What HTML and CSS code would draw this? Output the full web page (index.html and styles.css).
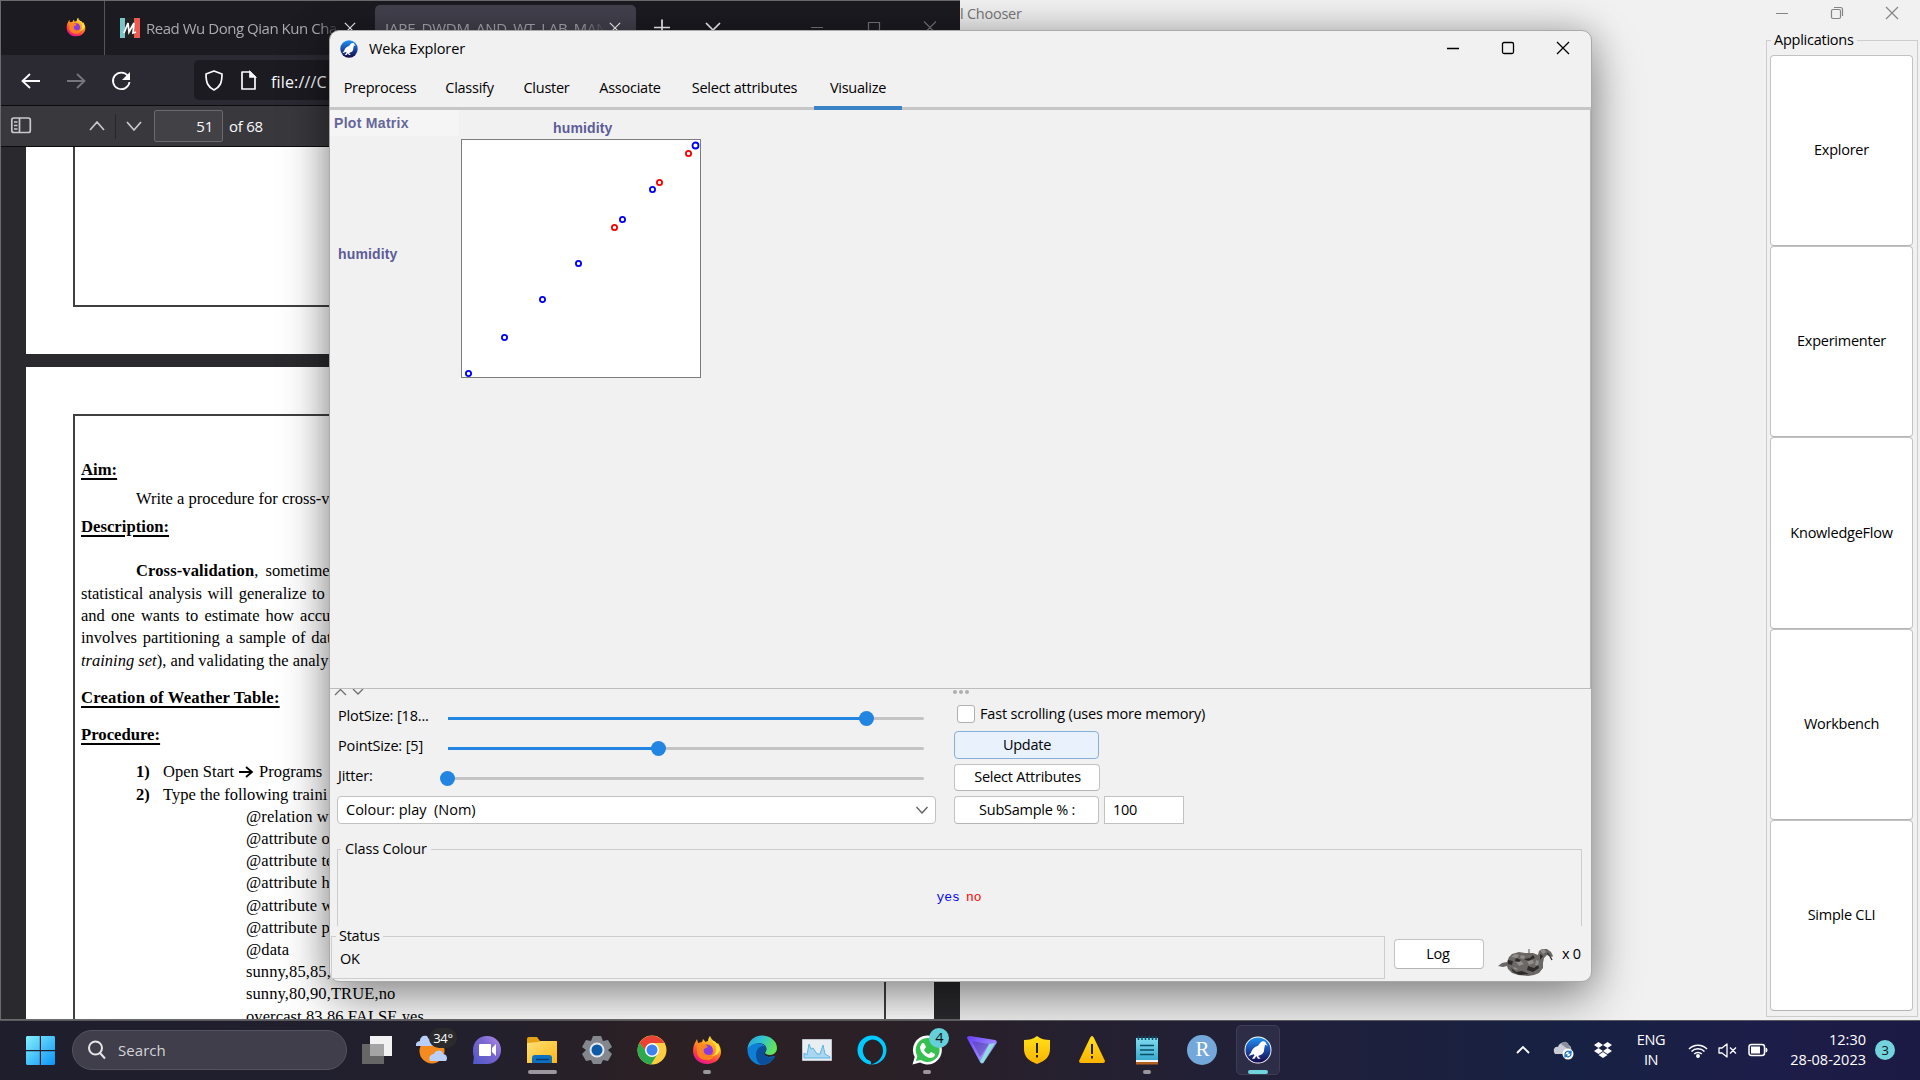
FILE: index.html
```html
<!DOCTYPE html>
<html lang="en">
<head>
<meta charset="utf-8">
<title>Weka Explorer</title>
<link rel="stylesheet" href="styles.css">
</head>
<body>
<svg class="defs" width="0" height="0">
  <defs>
    <linearGradient id="wk" x1="0" y1="0" x2="0" y2="1"><stop offset="0" stop-color="#1d93f2"/><stop offset=".5" stop-color="#1b4aa8"/><stop offset="1" stop-color="#15094a"/></linearGradient>
    <linearGradient id="ff" x1=".8" y1="0" x2=".3" y2="1"><stop offset="0" stop-color="#fff04a"/><stop offset=".4" stop-color="#ff9a1f"/><stop offset=".75" stop-color="#ff3b47"/><stop offset="1" stop-color="#e5129a"/></linearGradient>
    <linearGradient id="win" x1="0" y1="0" x2="1" y2="1"><stop offset="0" stop-color="#84f0ff"/><stop offset="1" stop-color="#0c93f5"/></linearGradient>
    <linearGradient id="chat" x1="0" y1="1" x2="1" y2="0"><stop offset="0" stop-color="#5156c9"/><stop offset=".6" stop-color="#7b68d0"/><stop offset="1" stop-color="#b58fe8"/></linearGradient>
    <linearGradient id="fold" x1="0" y1="0" x2="1" y2="1"><stop offset="0" stop-color="#ffe07a"/><stop offset="1" stop-color="#fdb813"/></linearGradient>
    <linearGradient id="edge" x1="0" y1="0" x2="1" y2=".3"><stop offset="0" stop-color="#2a9fe0"/><stop offset=".5" stop-color="#30c3d0"/><stop offset="1" stop-color="#63e35c"/></linearGradient>
    <linearGradient id="vpn" x1="0" y1="0" x2="1" y2="1"><stop offset="0" stop-color="#6a3dff"/><stop offset=".6" stop-color="#9b86ff"/><stop offset="1" stop-color="#6ff0c0"/></linearGradient>
    <linearGradient id="note" x1="0" y1="0" x2="0" y2="1"><stop offset="0" stop-color="#7fdcf0"/><stop offset="1" stop-color="#37a9cf"/></linearGradient>
    <linearGradient id="warn" x1="0" y1="0" x2="0" y2="1"><stop offset="0" stop-color="#ffe11a"/><stop offset="1" stop-color="#fbb300"/></linearGradient>
    <symbol id="firefox" viewBox="0 0 30 30">
      <path fill="url(#ff)" d="M18 1c1 3 1 4 3 5 2 0 3 1 4 3l1-1c2 3 3 6 3 9 0 7-6 12-14 12S1 23 1 16c0-4 1-7 3-10l1-2 1 4 4-1 1-3c1 1 2 2 2 3l3-1c0-2 1-4 2-5z"/>
      <circle cx="15" cy="15.500" r="6" fill="#8a3be0"/>
      <path fill="#ff8a1c" d="M5 9c4-1 6 1 9 1l2 2-4 2c-1 3 1 6 5 6 3 0 5-1 6-4 1 5-3 10-9 9-6 0-10-5-9-10z" opacity=".9"/>
      <path fill="#ffe13c" d="M18 1c0 5 7 7 6 13 0 4-2 6-4 7 4 0 7-3 8-6 0-7-8-8-10-14z"/>
    </symbol>
    <symbol id="weka" viewBox="0 0 30 30">
      <circle cx="15" cy="15" r="14.5" fill="url(#wk)"/>
      <path fill="#fff" d="M21 5c2 0 3 1 3 2l2 3-3-1c0 2-1 4-1 6 0 3-2 5-5 6l-2 1 3 3h-3l-2-3-2 3h-3l3-4-1-1-6 2 3-4c1-4 4-7 8-8 2-2 3-5 6-5z"/>
    </symbol>
    <symbol id="cross" viewBox="0 0 14 14"><path d="M1 1l12 12M13 1L1 13" fill="none" stroke="currentColor" stroke-width="1.4"/></symbol>
  </defs>
</svg>

<main class="desktop">
  <section class="browser">
    <div class="tabstrip">
      <div class="pinned"><svg width="20" height="20"><use href="#firefox"/></svg></div>
      <div class="tab">
        <svg class="favicon" width="20" height="20"><path fill="#79c5c7" d="M0 0h6v20H0z"/><path fill="#222" d="M5 0h9v20H5z"/><path fill="#ee5a52" d="M14 0h6v20h-6z"/><path d="M4 15l4-10 1 9 5-9-1 10 3-1" fill="none" stroke="#fff" stroke-width="1.8"/></svg>
        <span class="tab-title first">Read Wu Dong Qian Kun Cha</span>
        <svg class="tab-x" width="12" height="12"><use href="#cross"/></svg>
      </div>
      <div class="tab active">
        <span class="tab-title second">IARE_DWDM_AND_WT_LAB_MAN</span>
        <svg class="tab-x" width="12" height="12"><use href="#cross"/></svg>
      </div>
      <svg class="strip-tools" width="300" height="54" fill="none" stroke="#fbfbfe" stroke-width="1.7"><path d="M18 26.500h16M26 18.500v16M70 22l7 7 7-7"/><g stroke="#77767c" stroke-width="1.2"><path d="M175 26.500h12M232.500 21.500h11v11h-11zM288 20.500l12 12M300 20.500l-12 12"/></g></svg>
    </div>
    <div class="navbar">
      <svg width="194" height="50" fill="none" stroke="#fbfbfe" stroke-width="1.8"><path d="M39 26H22M29 19l-7.500 7 7.500 7"/><path stroke="#77767e" d="M66 26h17M76 19l7.500 7-7.500 7"/><path d="M127 21a8.300 8.300 0 1 0 1.500 6"/><path fill="#fbfbfe" stroke="none" d="M129 17v8h-8z"/></svg>
      <div class="urlbar">
        <svg width="66" height="40" fill="none" stroke="#fbfbfe" stroke-width="1.700"><path stroke-linejoin="round" d="M20 11l8 3c0 9-2 13-8 16-6-3-8-7-8-16z"/><path stroke-linejoin="round" d="M48 12h8l5 5v12H48z"/><path fill="#fbfbfe" d="M56 12v5h5z"/></svg>
        <span>file:///C</span>
      </div>
    </div>
    <div class="pdfbar">
      <svg width="154" height="40" fill="none" stroke="#c9c9cc" stroke-width="1.700"><rect x="10.800" y="12" width="18.500" height="14.500" rx="2"/><path d="M18.500 12v15M13 16h3.500M13 19.500h3.500M13 23h3.500M89 24l7-8 7 8M126 16l7 8 7-8"/><path stroke="#26262a" stroke-width="1" d="M114.500 8v25"/></svg>
      <div class="pageno">51</div>
      <span class="pages">of 68</span>
    </div>
    <div class="viewer">
      <div class="sheet prev"><div class="frame"></div></div>
      <div class="sheet">
        <div class="frame text">
          <h3 class="aim">Aim:</h3>
          <p class="indent write">Write a procedure for cross-v</p>
          <h3 class="desc">Description:</h3>
          <p class="indent cv"><b>Cross-validation</b>, sometime</p>
          <p class="l1">statistical analysis will generalize to</p>
          <p class="l2">and one wants to estimate how accu</p>
          <p class="l3">involves partitioning a sample of dat</p>
          <p class="l4"><i>training set</i>), and validating the analy</p>
          <h3 class="creation">Creation of Weather Table:</h3>
          <h3 class="proc">Procedure:</h3>
          <p class="step s1"><b>1)</b>Open Start <svg width="15" height="12"><path d="M0 6h13M7 1l6 5-6 5" fill="none" stroke="#000" stroke-width="1.800"/></svg> Programs</p>
          <p class="step s2"><b>2)</b>Type the following traini</p>
          <p class="code">@relation w</p>
          <p class="code">@attribute o</p>
          <p class="code">@attribute te</p>
          <p class="code">@attribute h</p>
          <p class="code">@attribute w</p>
          <p class="code">@attribute p</p>
          <p class="code">@data</p>
          <p class="code">sunny,85,85,</p>
          <p class="code">sunny,80,90,TRUE,no</p>
          <p class="code">overcast,83,86,FALSE,yes</p>
        </div>
      </div>
    </div>
  </section>

  <section class="chooser">
    <header>
      <span>l Chooser</span>
      <svg width="150" height="26" fill="none" stroke="#858585" stroke-width="1.200"><path d="M6 13.500h12M116 7l12 12M128 7l-12 12"/><rect x="61.500" y="9.500" width="9" height="9" rx="1.500"/><path d="M64 7.500h6.500a2 2 0 0 1 2 2V16"/></svg>
    </header>
    <div class="apps">
      <span class="legend">Applications</span>
      <button>Explorer</button>
      <button>Experimenter</button>
      <button>KnowledgeFlow</button>
      <button>Workbench</button>
      <button>Simple CLI</button>
    </div>
  </section>

  <section class="explorer">
    <header class="titlebar">
      <svg width="18" height="18"><use href="#weka"/></svg>
      <span>Weka Explorer</span>
      <svg class="controls" width="130" height="20" fill="none" stroke="#000" stroke-width="1.300"><path d="M2 10.500h12M112 4l12 12M124 4l-12 12"/><rect x="57.500" y="4.500" width="11" height="11" rx="1.500"/></svg>
    </header>
    <nav class="tabs">
      <span>Preprocess</span><span>Classify</span><span>Cluster</span><span>Associate</span><span>Select attributes</span><span class="on">Visualize</span>
    </nav>
    <div class="matrix">
      <div class="side">
        <div class="caption">Plot Matrix</div>
        <div class="attr">humidity</div>
      </div>
      <div class="cell">
        <div class="attr">humidity</div>
        <svg width="241" height="240" fill="none" stroke="#0000f5" stroke-width="1.800">
          <rect x=".5" y=".5" width="239" height="238" fill="#fff" stroke="#7c7c7c" stroke-width="1"/>
          <circle cx="234.500" cy="6.500" r="3"/><circle cx="191.500" cy="50.500" r="2.600"/><circle cx="161.500" cy="80.500" r="2.600"/><circle cx="117.500" cy="124.500" r="2.600"/><circle cx="81.500" cy="160.500" r="2.600"/><circle cx="43.500" cy="198.500" r="2.600"/><circle cx="7.500" cy="234.500" r="2.600"/>
          <g stroke="#f50000"><circle cx="227.500" cy="14.500" r="2.600"/><circle cx="198.500" cy="43.500" r="2.600"/><circle cx="153.500" cy="88.500" r="2.600"/></g>
        </svg>
      </div>
    </div>
    <div class="divider"><svg width="1260" height="8" fill="none" stroke="#6e6e6e" stroke-width="1.300"><path d="M5 6l5.500-5.500L16 6M23 0l5 5 5-5"/><g fill="#afafaf" stroke="none"><circle cx="625" cy="3" r="2"/><circle cx="631" cy="3" r="2"/><circle cx="637" cy="3" r="2"/></g></svg></div>
    <div class="settings">
      <div class="left">
        <div class="srow"><span>PlotSize: [18...</span><div class="track"><i style="width:419px"></i><b></b></div></div>
        <div class="srow"><span>PointSize: [5]</span><div class="track"><i style="width:211px"></i><b></b></div></div>
        <div class="srow"><span>Jitter:</span><div class="track"><i style="width:0"></i><b></b></div></div>
        <div class="combo"><span>Colour: play&nbsp; (Nom)</span><svg width="12" height="8"><path d="M.5 1l5.500 6 5.500-6" fill="none" stroke="#5e5e5e" stroke-width="1.300"/></svg></div>
      </div>
      <div class="right">
        <div class="check"><i></i><span>Fast scrolling (uses more memory)</span></div>
        <button class="focus">Update</button>
        <button class="sel">Select Attributes</button>
        <div class="sub"><button>SubSample % :</button><div class="field">100</div></div>
      </div>
    </div>
    <div class="classes"><span class="legend">Class Colour</span><code><span class="yes">yes</span><span class="no">no</span></code></div>
    <div class="statusbar">
      <div class="status"><span class="legend">Status</span><span>OK</span></div>
      <button>Log</button>
      <svg width="56" height="28" viewBox="0 0 56 28">
        <path fill="#6a6765" d="M0 18l4-3 5-1 2-5 3-3 7-2 6 1h8l5 2 1-4 3-2h5l4 3 2 4-1 1-5-2-3 3-1 5v5l-4 5-5 2-6 1-10-1-6-2-4-4-1-3-4 1z"/>
        <path fill="#918e8c" d="M13 9l4-3 4 1-2 3zM23 7l4 1-1 3-4-1zM42 2l4-1 2 3-3 2zM29 13l6-1 1 3-5 2zM18 14l5-1 3 3-5 2zM38 12l3 1-1 5-3-1zM15 19l4 1 1 2-4-1z"/>
        <path fill="#2d2a29" d="M10 12l5 1-1 4-4-1zM18 10l5 2-2 2-4-1zM26 11l6-1 3-3 2 3-7 3zM13 20l5 4 6-1 7 3-9 1-7-3zM30 18l6 2 4-3 1 3-6 4-6-2zM42 6l3 2-3 4z"/>
        <path d="M31 1v4" stroke="#555"/><path d="M49 5q3 2 5 7" fill="none" stroke="#333" stroke-width="1.400"/>
      </svg>
      <span class="count">x 0</span>
    </div>
  </section>
</main>

<footer class="taskbar">
  <svg class="start" width="29" height="29"><path fill="url(#win)" d="M1 0h12.800v14H0V1zM15 0h13l1 1v13H15zM0 15.200h13.800V29H1l-1-1zM15 15.200h14V28l-1 1H15z"/></svg>
  <div class="search"><svg width="20" height="20" fill="none" stroke="#e6e6e8" stroke-width="2"><circle cx="8.500" cy="8" r="6.500"/><path d="M13 13l5 5.500"/></svg><span>Search</span></div>
  <div class="apps-row">
    <div class="app"><svg width="30" height="30"><path fill="#f2f2f2" d="M8 1h22v20H8z"/><path fill="#666" d="M0 9h22v20H0z"/><path fill="#a5a5a5" d="M8 9h14v12H8z"/></svg></div>
    <div class="app weather"><svg width="32" height="30"><circle cx="16" cy="16" r="12.500" fill="#f58a1f"/><path fill="#b9cff8" d="M0 11c-1-4 3-5 4-5 0-4 3-6 7-5l6 10zM14 26c-2-4 1-7 4-7 2-5 9-4 9 0 4 0 5 5 3 7z"/></svg><span>34°</span></div>
    <div class="app"><svg width="30" height="30"><path fill="url(#chat)" d="M15 1c8 0 14 6 14 14s-6 14-14 14H1l1-7c-1-2-1-5-1-7C1 7 7 1 15 1z"/><rect x="7" y="9" width="12" height="12" rx="1" fill="#fff"/><path fill="#fff" d="M20 13l4-4v12l-4-4z"/></svg></div>
    <div class="app run wide"><svg width="30" height="30"><path fill="#e5a313" d="M0 4q0-2 2-2h8l3 4h17v6H0z"/><path fill="url(#fold)" d="M0 8l11-1 3-1h15l1 1v21H0z"/><path fill="#0e70c0" d="M5 28v-5q0-3 3-3h14q3 0 3 3v5z"/><path stroke="#063d70" stroke-width="1.500" d="M9 24.500h13"/></svg></div>
    <div class="app"><svg width="30" height="30"><path fill="#84888e" d="M11 1h8l2 5 5-1 4 7-4 3 4 4-4 7-5-1-2 4h-8l-2-4-5 1-4-7 4-4-4-3 4-7 5 1z"/><circle cx="15" cy="15" r="7.500" fill="#e4e8ec"/><circle cx="15" cy="15" r="5.500" fill="#0b5ba8"/></svg></div>
    <div class="app"><svg width="30" height="30"><circle cx="15" cy="15" r="14.500" fill="#ffcd40"/><path fill="#ea4335" d="M2.500 8A14.500 14.500 0 0 1 27.500 8H15l-7 7z"/><path fill="#2da94f" d="M2.500 7.800A14.500 14.500 0 0 0 14 29.500L21 18H10z"/><circle cx="15" cy="15" r="7" fill="#fff"/><circle cx="15" cy="15" r="5.500" fill="#3e82f1"/></svg></div>
    <div class="app run"><svg width="30" height="30"><use href="#firefox"/></svg></div>
    <div class="app"><svg width="30" height="30"><path fill="#0f7fd6" d="M.5 14C1 9 6 8 10 8c6 0 9 3 9 6l-3 6 6 2 6-1c-2 5-7 9-13 9C7 30 0 23 .5 14z"/><path fill="#0b4f9a" d="M9 20c0-5 3-9 7-9 3 0 4 2 3 4-2 1-2 3-1 5 2 3 7 3 10 1-3 6-8 9-13 9-4-1-6-6-6-10z"/><path fill="url(#edge)" d="M.5 14C1 6 7 .5 15 .5S30 6 30 13c0 4-3 7-7 7-3 0-5-1-5-2.500 2-2 2-5 0-7C14 6 4 8 .5 14z"/></svg></div>
    <div class="app"><svg width="30" height="30"><path fill="#e9eef2" stroke="#c0c6cb" d="M.5 4.500h29v21H.500z"/><path fill="#a9d7f2" stroke="#5fb4e2" d="M2 23v-5l3 2 2-11 2 5 2-1 4 6 3 0 3-9 2 9 5 3v1z"/></svg></div>
    <div class="app"><svg width="30" height="30"><path fill="#00caff" fill-rule="evenodd" d="M15 .5a14.500 14.500 0 1 1 0 29 14.500 14.500 0 0 1 0-29zM15 4.500a10.500 11 0 0 0-3 21c2 0 2 2 2 4 8-2 12-8 12-14A11 11 0 0 0 15 4.500z"/></svg></div>
    <div class="app run wa"><svg width="30" height="30"><path fill="#fff" d="M15 .5a14.500 14.500 0 1 1-7 27L.5 29.500 2.700 22A14.500 14.500 0 0 1 15 .500z"/><path fill="#35c04f" d="M15 3a12 12 0 1 1-6 22L4 26l1.300-5A12 12 0 0 1 15 3z"/><path fill="#fff" d="M10 8l2 0 2 4-2 3c1 2 3 4 5 4l2-2 4 2c0 3-3 4-5 4-5-1-10-6-10-11z"/></svg><span>4</span></div>
    <div class="app"><svg width="30" height="30"><path fill="url(#vpn)" d="M0 3q0-2 3-2l25 4q3 1 1 4L17 27q-2 3-4 0z"/><path fill="#2b2360" d="M5 6l17 3-9 13z" opacity=".3"/><path fill="#8df0da" d="M22 9l6-1-12 20-3-1z" opacity=".8"/></svg></div>
    <div class="app"><svg width="30" height="30"><path fill="url(#warn)" d="M15 1c4 3 8 4 13 4v9c0 8-5 12-13 15C7 26 2 22 2 14V5c5 0 9-1 13-4z"/><path stroke="#222" stroke-width="2" d="M15 8v10M15 20v2.500"/></svg></div>
    <div class="app"><svg width="30" height="30"><path fill="url(#warn)" d="M15 1q1 0 2 2l11 23q0 2-2 2H4q-2 0-2-2L13 3q1-2 2-2z"/><path stroke="#222" stroke-width="2" d="M15 9v10M15 21v2.500"/></svg></div>
    <div class="app run"><svg width="30" height="30"><path fill="url(#note)" d="M4 3h22v23H4z"/><path fill="#f5f5f5" d="M4 25h22v2H4z"/><path fill="#b3621f" d="M4 27h22v2.500H4z"/><path stroke="#0b4e68" stroke-width="1.500" d="M8 10.500h14M8 15h14M8 19.500h14M6.500 1v4M10 1v4M13.500 1v4M17 1v4M20.500 1v4M24 1v4"/></svg></div>
    <div class="app rr"><span>R</span></div>
    <div class="app run current"><svg width="28" height="28"><circle cx="14" cy="14" r="13.500" fill="#fff"/><use href="#weka" x="1" y="1" width="26" height="26"/></svg></div>
  </div>
  <div class="tray">
    <svg class="up" width="14" height="8"><path d="M1 7l6-6 6 6" fill="none" stroke="#fff" stroke-width="1.800"/></svg>
    <svg class="cloud" width="22" height="20"><path fill="#c9cbd6" d="M2 14c-3-4 0-8 3-7 1-5 8-6 10-2 3 0 4 4 3 9z"/><path fill="#8b8e9e" d="M8 4c3-4 8-2 8 2l2 2-2 2z"/><circle cx="15" cy="14" r="5.500" fill="#fff"/><path d="M12 14a3 3 0 0 1 5.500-1.500M18 14a3 3 0 0 1-5.500 1.500M18 10.500v2.500h-2.500M12 17.500V15h2.500" fill="none" stroke="#1672c4" stroke-width="1.300"/></svg>
    <svg class="dbx" width="18" height="16" fill="#fff"><path d="M4.500 0L9 3 4.500 6 0 3zM13.500 0L18 3l-4.500 3L9 3zM4.500 6L9 9l-4.500 3L0 9zM13.500 6L18 9l-4.500 3L9 9zM9 10l4.500 3L9 16l-4.500-3z"/></svg>
    <div class="lang">ENG<br>IN</div>
    <svg class="wifi" width="20" height="15" fill="none" stroke="#fff" stroke-width="1.500"><path d="M1 6a12.700 12.700 0 0 1 18 0M3.500 8.500a9.200 9.200 0 0 1 13 0M6.200 11a5.400 5.400 0 0 1 7.600 0"/><circle cx="10" cy="13" r="1.200" fill="#fff"/></svg>
    <svg class="mute" width="20" height="15" fill="none" stroke="#fff" stroke-width="1.300"><path stroke-linejoin="round" d="M1 5h3l5-4v13l-5-4H1zM12 4.500l6 6M18 4.500l-6 6"/></svg>
    <svg class="bat" width="20" height="14" fill="none" stroke="#fff" stroke-width="1.500"><rect x="1" y="1.500" width="15.500" height="11" rx="2.500"/><path fill="#fff" stroke="none" d="M3 3.500h9v7H3zM17.500 4.500q2 0 2 2.500t-2 2.500z"/></svg>
    <div class="clock">12:30<br>28-08-2023</div>
    <div class="notif">3</div>
  </div>
</footer>
</body>
</html>
```
FILE: styles.css
```css
* { box-sizing: border-box; }
body { margin: 0; width: 1920px; height: 1080px; overflow: hidden; font: 14.5px/20px "Open Sans", "Noto Sans", sans-serif; letter-spacing: -.25px; color: #111; background: #f1f1f1; }
p, h3 { margin: 0; }
svg { display: block; flex: none; }
.defs { position: absolute; }
button { font: inherit; letter-spacing: inherit; color: #000; background: #fff; border: 1px solid #c2c2c2; border-bottom-color: #b5b5b5; border-radius: 4px; padding: 0 0 1px; margin: 0; white-space: nowrap; }
.desktop { position: relative; height: 1020px; overflow: hidden; }

/* browser window */
.browser { position: absolute; left: 0; top: 0; width: 960px; height: 1020px; display: flex; flex-direction: column; background: #2a2a2e; border: 1px solid #6b6b6b; border-right: 0; color: #fbfbfe; }
.tabstrip { height: 54px; display: flex; background: #1c1b22; }
.pinned { width: 104px; padding: 16px 0 0 65px; border-right: 1px solid #55545c; }
.tab { width: 261px; display: flex; align-items: center; height: 54px; padding-left: 15px; color: #aaa9b0; }
.tab + .tab { margin: 4px 0 0 9px; height: 50px; padding: 0 0 5px 10px; background: #42414d; border-radius: 5px 5px 0 0; }
.favicon { margin-right: 6px; }
.tab-title { white-space: nowrap; -webkit-mask-image: linear-gradient(90deg, #000 88%, transparent); mask-image: linear-gradient(90deg, #000 88%, transparent); font-size: 15px; }
.first { width: 195px; letter-spacing: -.47px; }
.second { width: 222px; letter-spacing: -.25px; }
.tab-x { color: #fbfbfe; margin-left: 2px; }
.first + .tab-x { margin-left: 3px; }
.navbar { height: 50px; display: flex; background: #2b2a33; }
.urlbar { margin-top: 5px; width: 500px; height: 40px; display: flex; align-items: center; background: #1c1b22; border-radius: 5px; font-size: 16px; }
.urlbar span { margin: 3px 0 0 11px; letter-spacing: .15px; }
.navbar > svg { margin-right: -1px; }
.pdfbar { height: 42px; display: flex; align-items: center; background: #38383d; border-top: 1px solid #0c0c0d; border-bottom: 1px solid #0c0c0d; font-size: 15px; }
.pageno { width: 69px; height: 32px; margin-left: -1px; border: 1px solid #6a6a6e; border-radius: 2px; background: #414146; text-align: right; padding: 5px 9px 0 0; }
.pages { margin-left: 6px; }
.viewer { flex: 1; overflow: hidden; padding-left: 25px; }
.sheet { width: 908px; height: 800px; background: #fff; padding: 47px 0 0 47px; margin-bottom: 13px; }
.sheet.prev { height: 207px; padding-top: 0; }
.frame { width: 813px; height: 800px; border: 2px solid #404040; }
.prev .frame { height: 160px; border-top: 0; }
.text { padding: 43px 0 0 6px; color: #000; font: 16.5px/22px "Liberation Serif", serif; letter-spacing: 0; white-space: nowrap; }
.text h3 { font-size: 16.7px; text-decoration: underline; text-decoration-thickness: 1.5px; text-underline-offset: 3px; }
.indent { padding-left: 55px; }
.write { margin-top: 7px; }
.desc { margin-top: 6px; }
.cv { margin-top: 22px; word-spacing: 3px; }
.cv b { letter-spacing: .13px; }
.l1, .l2, .l3, .l4 { line-height: 22.2px; }
.l1 { word-spacing: 1.400px; margin-top: 1px; }
.l2 { word-spacing: 2px; }
.l3 { word-spacing: 1.800px; }
.l4 { letter-spacing: 0; }
.creation { margin-top: 15px; letter-spacing: .17px; }
.proc { margin-top: 15px; }
.step { padding-left: 55px; display: flex; align-items: center; gap: 5px; }
.step b { width: 22px; }
.s1 { margin-top: 15px; }
.s2 { margin-top: 1px; }
.code { padding-left: 165px; line-height: 22.200px; letter-spacing: .1px; }

/* GUI chooser window */
.chooser { position: absolute; left: 960px; top: 0; width: 960px; height: 1020px; background: #f1f1f1; }
.chooser header { display: flex; justify-content: space-between; height: 40px; padding: 4px 0 0; color: #777; }
.chooser header svg { margin-top: -4px; }
.apps { margin: 0 2px 0 806px; height: 977px; border: 1px solid #cdcdcd; padding: 14px 4px 5px 3px; display: flex; flex-direction: column; position: relative; }
.apps button { flex: 1; }
.legend { position: absolute; top: -11px; left: 4px; background: #f1f1f1; padding: 0 3px; color: #000; }

/* explorer window */
.explorer { position: absolute; left: 329px; top: 30px; width: 1263px; height: 952px; display: flex; flex-direction: column; background: #f1f1f1; border: 1px solid #a9a9a9; border-radius: 10px; color: #000; box-shadow: 0 18px 50px rgba(0,0,0,.38), 0 0 34px rgba(0,0,0,.2); }
.titlebar { height: 36px; display: flex; align-items: center; padding-left: 10px; }
.titlebar span { margin: -1px 0 0 11px; flex: 1; letter-spacing: -.15px; }
.controls { margin: -2px 16px 0 0; }
.tabs { height: 43px; display: grid; grid-template-columns: 100px 79px 75px 92px 137px 88px; text-align: center; line-height: 42px; border-bottom: 3px solid #c6c6c6; }
.tabs .on { height: 43px; border-bottom: 4px solid #3c83c5; z-index: 1; margin: 0 -1px 0 1px; }
.matrix { height: 579px; display: flex; border-right: 1px solid #b5b5b5; font: bold 14px/20px "Liberation Sans", sans-serif; letter-spacing: .15px; color: #5c5c99; border-bottom: 1px solid #bdbdbd; }
.side { width: 131px; }
.caption { height: 26px; width: 129px; background: #f5f5f5; padding: 3px 0 0 4px; letter-spacing: .3px; color: #66669a; }
.side .attr { margin: 108px 0 0 8px; }
.cell { width: 241px; padding-top: 8px; }
.cell .attr { height: 21px; padding-left: 92px; }
.divider { height: 8px; }
.settings { display: flex; height: 143px; }
.left { width: 599px; margin: 4px 18px 0 7px; }
.srow { height: 30px; display: flex; padding: 4px 0 0 1px; }
.srow span { width: 110px; margin-top: 1px; letter-spacing: -.15px; }
.track { width: 476px; height: 3px; margin-top: 12px; background: #c4c4c4; display: flex; align-items: center; border-radius: 2px; }
.track i { height: 3px; background: #2385e2; }
.track b { width: 15px; height: 15px; border-radius: 50%; background: #2385e2; margin-left: -8px; flex: none; }
.combo { display: flex; align-items: center; justify-content: space-between; height: 28px; margin-top: 5px; padding: 0 7px 1px 8px; background: #fff; border: 1px solid #c2c2c2; border-radius: 4px; letter-spacing: 0; }
.right { width: 400px; padding-top: 5px; display: flex; flex-direction: column; align-items: flex-start; }
.check { height: 29px; display: flex; padding: 2px 0 0 3px; letter-spacing: -.19px; }
.check i { width: 18px; height: 18px; border: 1px solid #b0b0b0; border-radius: 3px; background: #fff; margin: 1px 5px 0 0; }
.right button { width: 145px; height: 28px; padding-left: 1px; }
.right .focus { background: #e8f1fc; border-color: #87afda; margin-bottom: 5px; }
.right .sel { width: 146px; height: 27px; margin-bottom: 5px; }
.sub { display: flex; gap: 5px; }
.field { width: 80px; height: 28px; border: 1px solid #c2c2c2; background: #fff; padding: 3px 8px; }
.classes { position: relative; height: 77px; margin: 9px 9px 0 7px; border: 1px solid #cdcdcd; border-bottom: 0; display: flex; justify-content: center; padding: 38px 1px 0 0; }
.classes .legend { left: 3px; padding: 0 4px; letter-spacing: -.15px; }
code { display: flex; gap: 6px; font: 13px/20px "Liberation Mono", monospace; letter-spacing: 0; }
.yes { color: #00f; }
.no { color: #f00; }
.statusbar { display: flex; height: 53px; padding: 10px 9px 0 1px; }
.status { position: relative; width: 1054px; height: 43px; border: 1px solid #cdcdcd; padding: 12px 0 0 8px; }
.statusbar button { width: 90px; height: 30px; margin: 3px 14px 0 9px; padding-right: 2px; }
.statusbar svg { margin-top: 12px; }
.statusbar .count { margin: 8px 0 0 8px; white-space: nowrap; }

/* taskbar */
.taskbar { position: relative; height: 60px; display: flex; align-items: center; padding-bottom: 1px; border-top: 1px solid #5a5a5e; background: linear-gradient(90deg, #1f1e2d 0, #22202d 25%, #2b2024 34%, #2a2026 46%, #20203a 67%, #172143 82%, #1d1d49 92%, #1b1a44 100%); color: #fff; }
.start { margin: 0 17px 0 26px; }
.search { width: 275px; height: 40px; margin-right: 3px; border-radius: 20px; border: 1px solid #55535f; background: #403e4a; display: flex; align-items: center; padding: 0 0 0 14px; color: #d5d4d9; font-size: 15px; letter-spacing: .05px; }
.search span { margin: 0 0 0 11px; }
.apps-row { display: flex; }
.app { width: 44px; height: 50px; margin: 0 5.530px 0 5.530px; display: flex; align-items: center; justify-content: center; position: relative; border-radius: 5px; }
.app:first-child { margin-left: 5px; }
.run::after { content: ""; position: absolute; bottom: 1px; width: 8px; height: 4px; border-radius: 2px; background: #9a989e; }
.wide::after { width: 29px; }
.current { background: #2e2d47; border: 1px solid #3e3c54; }
.current::after { width: 20px; bottom: 0; background: #70d2dc; }
.weather span { position: absolute; left: 19px; top: 3px; width: 28px; height: 20px; border-radius: 10px; background: #2b2b2d; font-size: 13px; text-align: center; }
.wa span { position: absolute; left: 24px; top: 3px; width: 20px; height: 20px; border-radius: 10px; background: #65d0da; color: #111; text-align: center; }
.rr span { width: 30px; height: 30px; border-radius: 15px; background: #75a8da; text-align: center; font: 21px/29px "Liberation Serif", serif; }
.tray { display: flex; align-items: center; position: absolute; left: 1516px; top: 0; height: 58px; letter-spacing: -.4px; }
.cloud { margin-left: 23px; }
.dbx { margin-left: 19px; }
.lang { width: 50px; margin-left: 14px; text-align: center; }
.wifi { margin-left: 12px; }
.mute { margin-left: 10px; }
.bat { margin-left: 10px; }
.clock { width: 98px; text-align: right; letter-spacing: 0; }
.notif { width: 20px; height: 20px; margin-left: 9px; border-radius: 50%; background: #72d3df; color: #111; text-align: center; font-size: 13px; }
```
